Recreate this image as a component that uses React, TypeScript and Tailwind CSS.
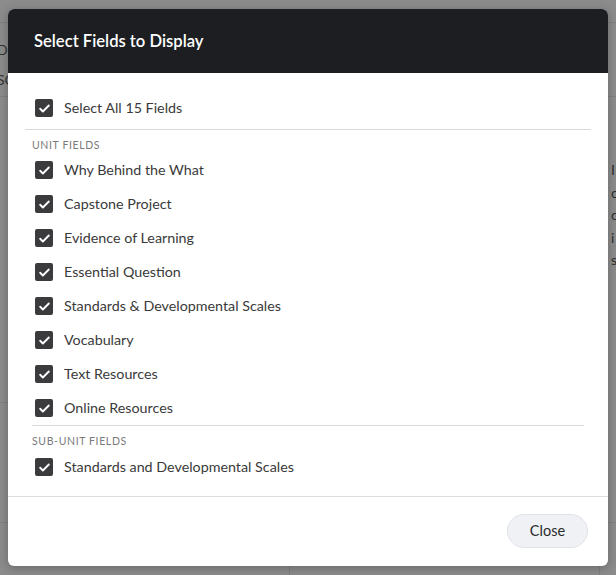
import React from 'react';

const unitFields = [
  'Why Behind the What',
  'Capstone Project',
  'Evidence of Learning',
  'Essential Question',
  'Standards & Developmental Scales',
  'Vocabulary',
  'Text Resources',
  'Online Resources',
];

const CheckBox = () => (
  <span className="w-[18px] h-[18px] rounded-[2px] bg-[#3b3b3d] flex items-center justify-center shrink-0">
    <svg width="13" height="13" viewBox="0 0 24 24" fill="none" stroke="white" strokeWidth="3.4" strokeLinecap="round" strokeLinejoin="round">
      <path d="M4 12.5l5 5L20 6.5" />
    </svg>
  </span>
);

const FieldRow = ({ label }: { label: string }) => (
  <label className="flex items-center h-[34px] pl-[27px] gap-[11px] text-[14.3px] text-[#3a3a3a]">
    <CheckBox />
    <span>{label}</span>
  </label>
);

const SectionLabel = ({ children }: { children: React.ReactNode }) => (
  <div className="pl-[24px] pt-[8px] pb-[2px] text-[10.5px] tracking-[0.06em] text-[#7a7a7a] uppercase leading-[14px]">
    {children}
  </div>
);

const App: React.FC = () => {
  return (
    <div className="relative w-[616px] h-[575px] overflow-hidden bg-[#8b8b8b]" style={{ fontFamily: 'Lato, "Open Sans", sans-serif' }}>
      {/* dimmed page behind the dialog */}
      <div className="absolute inset-0 text-[#333] text-[14px]">
        <div className="h-[23px] border-b border-[#7f7f7f]" />
        <div className="h-[74px] border-b border-[#7f7f7f] pt-[12px] leading-[30px]">
          <div className="-ml-[3px]">D</div>
          <div className="-ml-[3px]">SC</div>
        </div>
        <div className="flex">
          <div className="w-[290px] h-[306px] border-b border-[#7f7f7f]" />
          <div className="flex-1" />
          <div className="w-[16px] h-[306px] border-l border-[#7f7f7f] pt-[62px] pl-[10px] leading-[22.5px] text-[#2e2e2e]">
            <div>I</div>
            <div>c</div>
            <div>c</div>
            <div>i</div>
            <div>s</div>
          </div>
        </div>
        <div className="h-[120px] border-b border-[#7f7f7f]" />
        <div className="flex h-[60px]">
          <div className="w-[290px] border-r border-[#7f7f7f]" />
          <div className="flex-1 border-r border-[#7f7f7f] mr-[16px]" />
        </div>
      </div>

      {/* dialog */}
      <div className="absolute inset-0 pl-[8px] pt-[9px]">
        <div className="w-[600px] h-[557px] bg-white rounded-[6px] overflow-hidden flex flex-col shadow-[0_2px_10px_rgba(0,0,0,0.25)]">
          <div className="h-[64px] bg-[#1c1e22] flex items-center pl-[26px]">
            <h2 className="text-white text-[16.6px] font-semibold">Select Fields to Display</h2>
          </div>

          <div className="flex-1 flex flex-col pt-[18px]">
            <div className="mx-[17px] border-b border-[#dadada] pb-[4px]">
              <label className="flex items-center h-[34px] pl-[10px] gap-[11px] text-[14.3px] text-[#3a3a3a]">
                <CheckBox />
                <span>Select All 15 Fields</span>
              </label>
            </div>

            <SectionLabel>Unit Fields</SectionLabel>
            <div className="-mt-[1px]">
              {unitFields.map((f) => (
                <FieldRow key={f} label={f} />
              ))}
            </div>

            <div className="mx-[24px] border-b border-[#dadada]" />
            <SectionLabel>Sub-Unit Fields</SectionLabel>
            <FieldRow label="Standards and Developmental Scales" />
          </div>

          <div className="h-[70px] border-t border-[#dedede] flex items-center justify-end pr-[20px] pb-[2px]">
            <button className="h-[34px] w-[81px] rounded-full bg-[#eff1f4] border border-[#dfe2e7] text-[14.5px] text-[#2b2b2b]">
              Close
            </button>
          </div>
        </div>
      </div>
    </div>
  );
};

export default App;
